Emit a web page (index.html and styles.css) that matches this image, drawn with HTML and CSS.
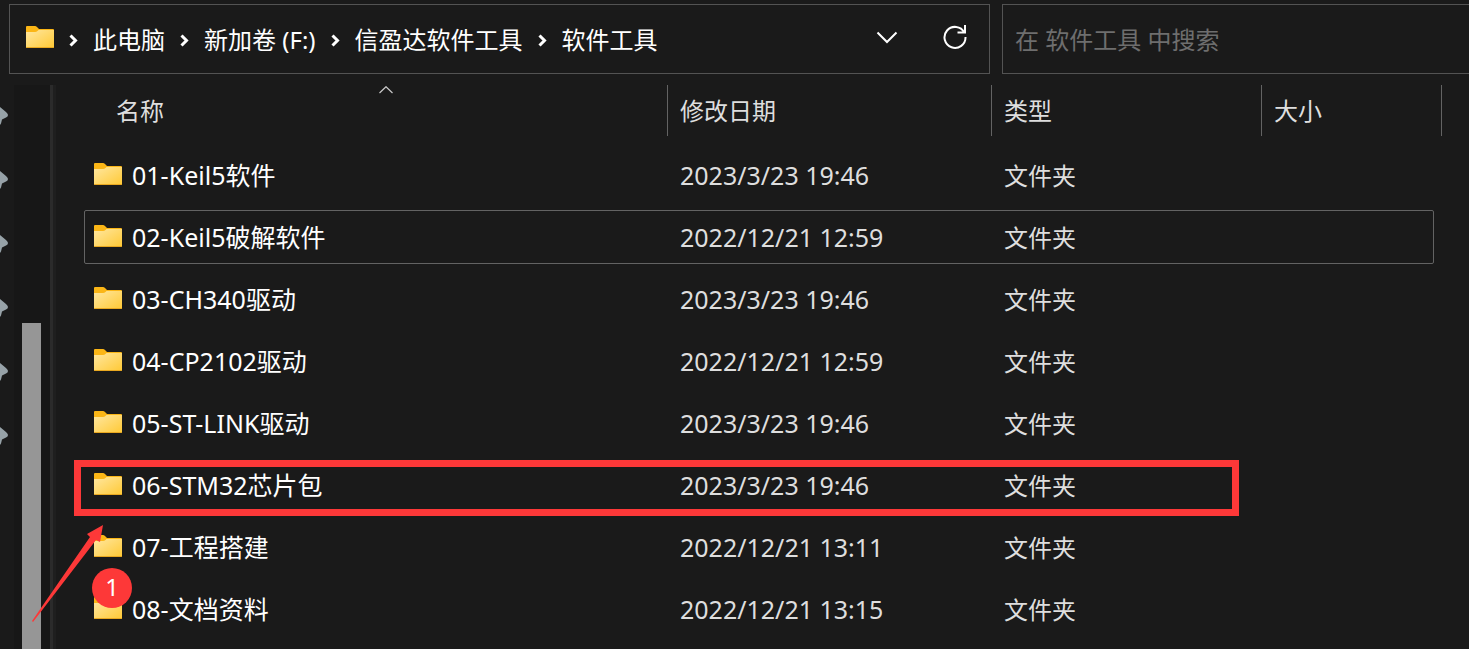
FILE: index.html
```html
<!DOCTYPE html>
<html lang="zh-CN">
<head>
<meta charset="utf-8">
<title>软件工具</title>
<link rel="stylesheet" href="styles.css">
</head>
<body>
<svg class="defs" aria-hidden="true">
  <defs>
    <linearGradient id="folder-face" x1="0" y1="0" x2="1" y2="1">
      <stop offset="0" stop-color="#ffe7a0"/>
      <stop offset="1" stop-color="#ffc935"/>
    </linearGradient>
    <symbol id="folder" viewBox="0 0 28 22">
      <path d="M0 1Q0 0 1 0H9Q10 0 11 1L13 3H27Q28 3 28 4V12H0Z" fill="#fbb616"/>
      <path d="M0 6H9Q10.500 6 11.500 5L12.500 4H28V21Q28 22 27 22H1Q0 22 0 21Z" fill="url(#folder-face)"/>
      <path d="M0 21H28Q28 22 27 22H1Q0 22 0 21Z" fill="#e9a820"/>
    </symbol>
    <symbol id="chevron" viewBox="0 0 9 13">
      <path d="M1.500 1.500L6.500 6.500L1.500 11.500" fill="none" stroke="#fff" stroke-width="3"/>
    </symbol>
    <symbol id="pin" viewBox="0 0 8 18">
      <path d="M0 0L6 5Q8 7 8 8Q8 9.500 6 10.500L2 12.500L1 16.500L0 18Z" fill="#97a2a8"/>
    </symbol>
  </defs>
</svg>

<header class="toolbar">
  <nav class="address" aria-label="路径">
    <svg class="folder"><use href="#folder"/></svg>
    <svg class="chevron"><use href="#chevron"/></svg>
    <a href="#">此电脑</a>
    <svg class="chevron"><use href="#chevron"/></svg>
    <a href="#">新加卷 (F:)</a>
    <svg class="chevron"><use href="#chevron"/></svg>
    <a href="#">信盈达软件工具</a>
    <svg class="chevron"><use href="#chevron"/></svg>
    <a href="#">软件工具</a>
    <div class="actions">
      <button type="button" aria-label="历史记录">
        <svg width="24" height="24" viewBox="0 0 24 24"><path d="M2.500 7.500L12 17L21.500 7.500" fill="none" stroke="#fff" stroke-width="2"/></svg>
      </button>
      <button type="button" aria-label="刷新">
        <svg width="24" height="24" viewBox="0 0 24 24"><path d="M21.300 7.500A10.500 10.500 0 1 0 22.500 12M22 0V7.500H14.500" fill="none" stroke="#fff" stroke-width="2"/></svg>
      </button>
    </div>
  </nav>
  <input class="search" type="search" placeholder="在 软件工具 中搜索" aria-label="搜索">
</header>

<div class="workspace">
  <aside class="sidebar">
    <ul class="pins">
      <li><svg class="pin"><use href="#pin"/></svg></li>
      <li><svg class="pin"><use href="#pin"/></svg></li>
      <li><svg class="pin"><use href="#pin"/></svg></li>
      <li><svg class="pin"><use href="#pin"/></svg></li>
      <li><svg class="pin"><use href="#pin"/></svg></li>
      <li><svg class="pin"><use href="#pin"/></svg></li>
    </ul>
    <div class="track"><div class="thumb"></div></div>
    <div class="splitter"></div>
  </aside>

  <main class="content">
    <table class="files">
      <colgroup><col><col class="col-date"><col class="col-type"><col class="col-size"></colgroup>
      <thead>
        <tr>
          <th class="first" aria-sort="ascending"><button type="button">名称<svg class="sort" viewBox="0 0 14 8"><path d="M.5 7L7 .7L13.500 7" fill="none" stroke="#c8c8c8" stroke-width="1.200"/></svg></button></th>
          <th><button type="button">修改日期</button></th>
          <th><button type="button">类型</button></th>
          <th><button type="button">大小</button></th>
        </tr>
      </thead>
      <tbody>
        <tr><td><div class="name"><svg class="folder"><use href="#folder"/></svg>01-Keil5软件</div></td><td class="date">2023/3/23 19:46</td><td>文件夹</td><td></td></tr>
        <tr class="focused"><td><div class="name"><svg class="folder"><use href="#folder"/></svg>02-Keil5破解软件</div></td><td class="date">2022/12/21 12:59</td><td>文件夹</td><td></td></tr>
        <tr><td><div class="name"><svg class="folder"><use href="#folder"/></svg>03-CH340驱动</div></td><td class="date">2023/3/23 19:46</td><td>文件夹</td><td></td></tr>
        <tr><td><div class="name"><svg class="folder"><use href="#folder"/></svg>04-CP2102驱动</div></td><td class="date">2022/12/21 12:59</td><td>文件夹</td><td></td></tr>
        <tr><td><div class="name"><svg class="folder"><use href="#folder"/></svg>05-ST-LINK驱动</div></td><td class="date">2023/3/23 19:46</td><td>文件夹</td><td></td></tr>
        <tr class="marked"><td><div class="name"><svg class="folder"><use href="#folder"/></svg>06-STM32芯片包</div>
          <div class="frame"></div>
          <svg class="arrow" viewBox="0 0 72 98"><path d="M71 0L68 17L64 15L1 97L0 96L58 12L55 9Z" fill="#fd3838"/></svg>
          <span class="step">1</span>
        </td><td class="date">2023/3/23 19:46</td><td>文件夹</td><td></td></tr>
        <tr><td><div class="name"><svg class="folder"><use href="#folder"/></svg>07-工程搭建</div></td><td class="date">2022/12/21 13:11</td><td>文件夹</td><td></td></tr>
        <tr><td><div class="name"><svg class="folder"><use href="#folder"/></svg>08-文档资料</div></td><td class="date">2022/12/21 13:15</td><td>文件夹</td><td></td></tr>
      </tbody>
    </table>
  </main>
</div>
</body>
</html>
```

FILE: styles.css
```css
* {
  box-sizing: border-box;
}

body {
  margin: 0;
  min-height: 100vh;
  display: flex;
  flex-direction: column;
  background: #1a1a1a;
  color: #fff;
  font: 24px/32px "Noto Sans", "Noto Sans CJK SC", sans-serif;
  overflow-x: hidden;
}

button,
input {
  font: inherit;
  color: inherit;
}

button {
  background: none;
  border: 0;
  padding: 0;
}

svg {
  display: block;
  flex: none;
}

.defs {
  position: absolute;
  width: 0;
  height: 0;
}

.folder {
  width: 28px;
  height: 22px;
}

.toolbar {
  display: grid;
  grid-template-columns: minmax(0, 981fr) minmax(0, 467fr);
  gap: 12px;
  padding: 4px 0 0 9px;
}

.address {
  display: flex;
  align-items: center;
  gap: 15px;
  height: 70px;
  padding: 0 22px 4px 16px;
  border: 1px solid #535353;
  white-space: nowrap;
}

.address a {
  color: inherit;
  text-decoration: none;
  padding-top: 6px;
}

.chevron {
  width: 9px;
  height: 13px;
  margin-top: 6px;
}

.actions {
  display: flex;
  gap: 44px;
  margin-left: auto;
}

.search {
  width: 100%;
  height: 70px;
  padding: 0 12px;
  background: none;
  border: 1px solid #535353;
  border-right: 0;
  border-radius: 0;
  outline: 0;
  appearance: none;
}

.search::placeholder {
  color: #6e6e6e;
  opacity: 1;
}

.workspace {
  flex: 1;
  display: flex;
  margin-top: 11px;
}

.sidebar {
  display: flex;
  flex: none;
}

.pins {
  width: 14px;
  margin: 0;
  padding: 0;
  list-style: none;
}

.pins li {
  height: 64px;
  padding-top: 22px;
}

.pin {
  width: 8px;
  height: 18px;
}

.track {
  display: flex;
  width: 36px;
  padding: 238px 9px 0 8px;
  background: #171717;
}

.thumb {
  flex: 1;
  background: #969696;
}

.splitter {
  width: 6px;
  background: #1f1f1f;
  border-left: 3px solid #2b2b2b;
}

.content {
  flex: 1;
  min-width: 0;
  padding: 0 27px 0 28px;
}

.files {
  width: 100%;
  table-layout: fixed;
  border-collapse: collapse;
  color: #dedede;
}

.col-date {
  width: 324px;
}

.col-type {
  width: 270px;
}

.col-size {
  width: 180px;
}

th {
  height: 59px;
  padding: 0;
  font-weight: 400;
  vertical-align: top;
}

th.first {
  padding-left: 20px;
}

th button {
  display: block;
  position: relative;
  width: 100%;
  height: 51px;
  padding: 0 12px;
  text-align: left;
  border-right: 1px solid #636363;
}

.sort {
  position: absolute;
  top: 1px;
  left: 0;
  right: 0;
  margin: 0 auto;
  width: 14px;
  height: 8px;
}

td {
  height: 62px;
  padding: 2px 12px 0;
  white-space: nowrap;
}

td:first-child {
  padding: 0 10px;
}

.name {
  display: flex;
  align-items: center;
  gap: 10px;
  font-size: 25px;
  color: #fff;
}

.name .folder {
  margin-bottom: 2px;
}

.date {
  padding-top: 0;
  font-size: 25px;
}

.focused,
.marked {
  position: relative;
}

.focused td:first-child::after {
  content: "";
  position: absolute;
  inset: 4px 8px 4px 0;
  border: 1px solid #636363;
  border-radius: 2px;
}

.marked {
  z-index: 1;
}

.frame {
  position: absolute;
  inset: 6px 203px 0 -10px;
  border: 7px solid #fd3838;
}

.arrow {
  position: absolute;
  top: 71px;
  left: -52px;
  width: 72px;
  height: 98px;
}

.step {
  position: absolute;
  top: 114px;
  left: 8px;
  width: 40px;
  height: 40px;
  border-radius: 50%;
  background: #fd3838;
  color: #fff;
  line-height: 38px;
  text-align: center;
}
```
